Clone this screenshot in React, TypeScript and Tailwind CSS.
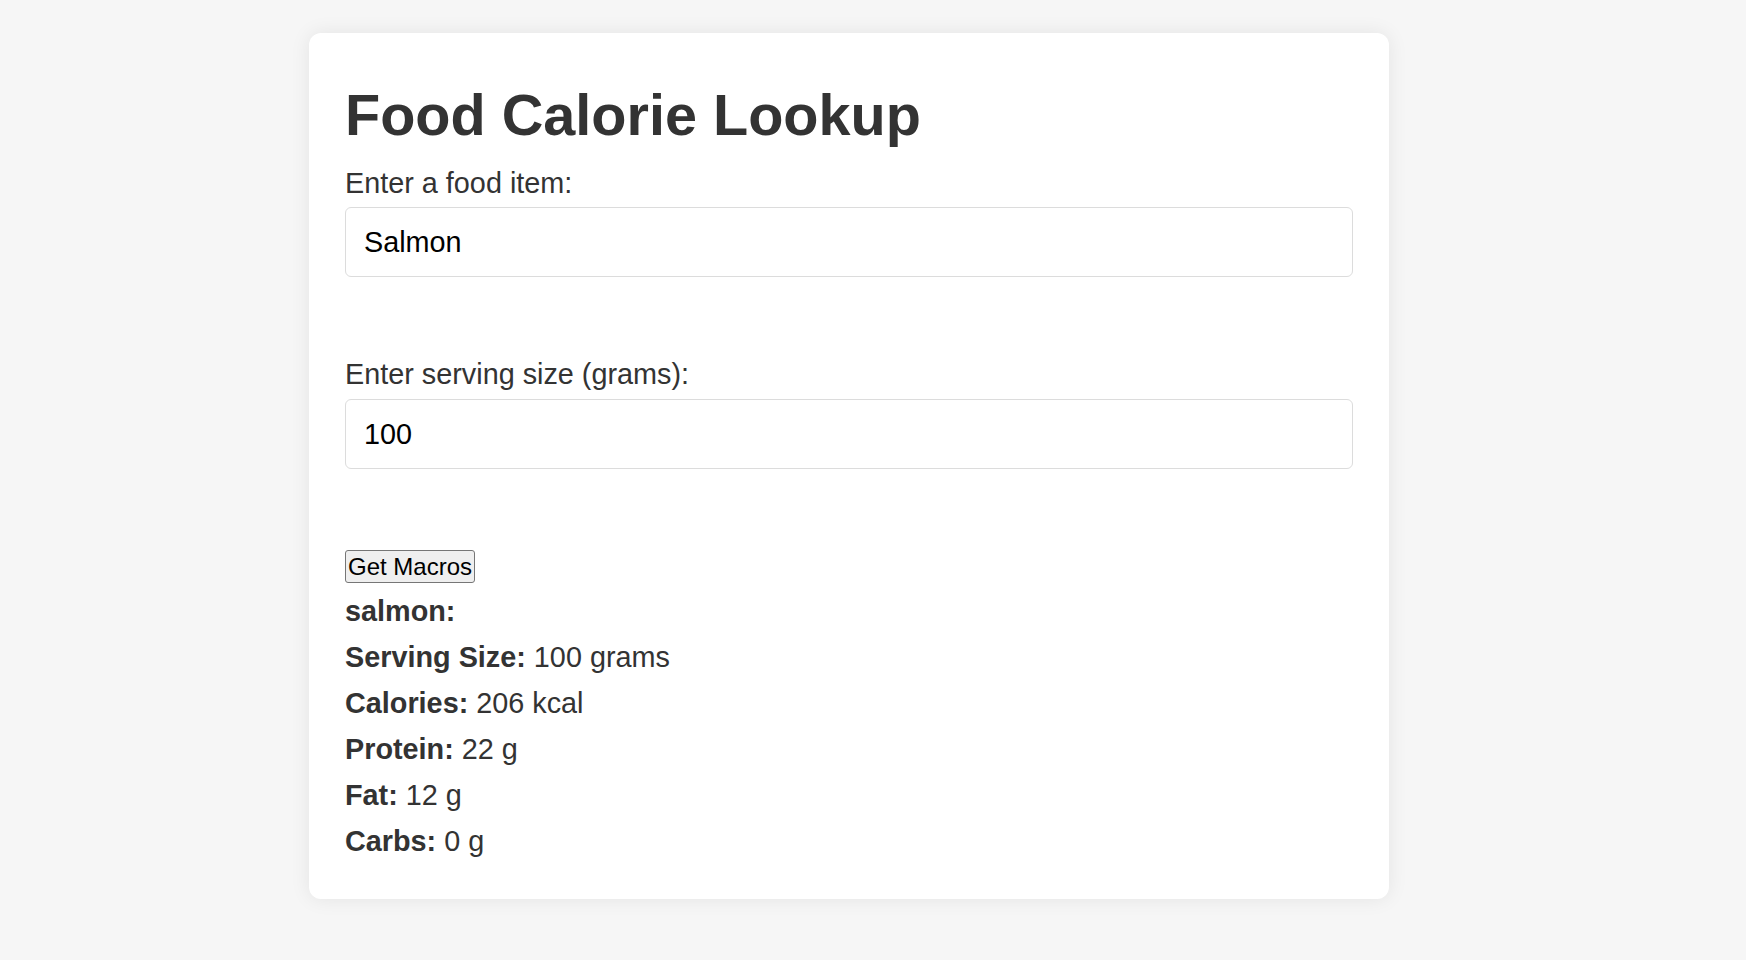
import React from "react";

export default function App() {
  const rows: [string, string][] = [
    ["Serving Size:", "100 grams"],
    ["Calories:", "206 kcal"],
    ["Protein:", "22 g"],
    ["Fat:", "12 g"],
    ["Carbs:", "0 g"],
  ];
  return (
    <div
      className="min-h-screen w-full bg-[#f6f6f6] pt-[33px] pb-[40px]"
      style={{ fontFamily: '"Liberation Sans", Arial, Helvetica, sans-serif' }}
    >
      <div className="ml-[309px] w-[1080px] rounded-[12px] bg-white px-[36px] pt-[36px] pb-[35px] shadow-[0_0_20px_rgba(0,0,0,0.08)] text-[#333]">
        <h1 className="mt-[13px] text-[57.6px] leading-[66px] font-bold">Food Calorie Lookup</h1>
        <label className="mt-[19px] block text-[28.8px] leading-[33px]">Enter a food item:</label>
        <input
          className="mt-[7px] block h-[70px] w-full rounded-[6px] border border-[#dcdcdc] bg-white pl-[18px] text-[28.8px] text-black outline-none"
          defaultValue="Salmon"
        />
        <label className="mt-[81px] block text-[28.8px] leading-[33px]">Enter serving size (grams):</label>
        <input
          className="mt-[8px] block h-[70px] w-full rounded-[6px] border border-[#dcdcdc] bg-white pl-[18px] text-[28.8px] text-black outline-none"
          defaultValue="100"
        />
        <button className="mt-[81px] block h-[33px] w-[130px] rounded-[3px] border border-[#767676] bg-[#efefef] px-0 text-[24px] leading-[31px] text-black">
          Get Macros
        </button>
        <div className="mt-[5px] text-[28.8px] leading-[46px]">
          <div className="font-bold">salmon:</div>
          {rows.map(([k, v]) => (
            <div key={k}>
              <span className="font-bold">{k}</span> {v}
            </div>
          ))}
        </div>
      </div>
    </div>
  );
}
